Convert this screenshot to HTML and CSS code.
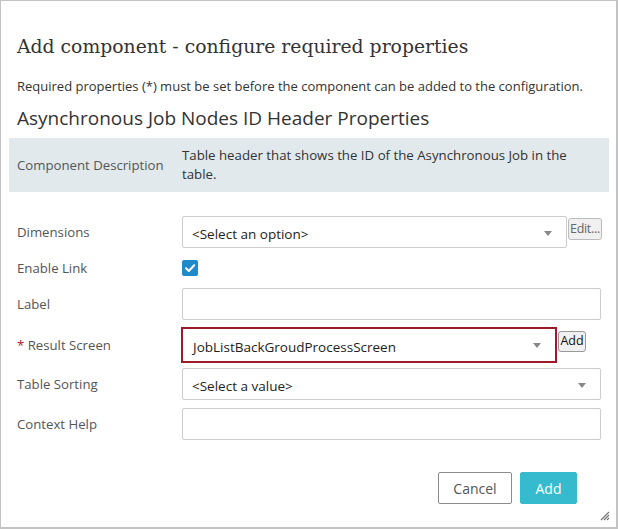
FILE: index.html
```html
<!DOCTYPE html>
<html>
<head>
<meta charset="utf-8">
<link rel="stylesheet" href="styles.css">
</head>
<body>
<div class="dialog">
  <h1 class="title">Add component - configure required properties</h1>
  <p class="intro">Required properties (*) must be set before the component can be added to the configuration.</p>
  <h2 class="heading">Asynchronous Job Nodes ID Header Properties</h2>
  <div class="desc">
    <div class="desc-label">Component Description</div>
    <div class="desc-text">Table header that shows the ID of the Asynchronous Job in the table.</div>
  </div>
  <div class="form">
    <div class="row">
      <div class="label">Dimensions</div>
      <div class="control">
        <div class="select sel-dim"><span>&lt;Select an option&gt;</span><i class="arrow"></i></div>
        <button class="mini mini-edit">Edit...</button>
      </div>
    </div>
    <div class="row row-check">
      <div class="label">Enable Link</div>
      <div class="control">
        <span class="checkbox"><svg width="16" height="16" viewBox="0 0 16 16"><path d="M4 8.2 L6.8 11 L12.2 5.2" fill="none" stroke="#fff" stroke-width="2" stroke-linecap="round" stroke-linejoin="round"/></svg></span>
      </div>
    </div>
    <div class="row">
      <div class="label">Label</div>
      <div class="control"><div class="input"></div></div>
    </div>
    <div class="row">
      <div class="label"><span class="req">*</span> Result Screen</div>
      <div class="control">
        <div class="select sel-result"><span>JobListBackGroudProcessScreen</span><i class="arrow"></i></div>
        <button class="mini mini-add">Add</button>
      </div>
    </div>
    <div class="row">
      <div class="label">Table Sorting</div>
      <div class="control"><div class="select sel-full"><span>&lt;Select a value&gt;</span><i class="arrow"></i></div></div>
    </div>
    <div class="row">
      <div class="label">Context Help</div>
      <div class="control"><div class="input"></div></div>
    </div>
  </div>
  <div class="footer">
    <button class="btn btn-cancel">Cancel</button>
    <button class="btn btn-add">Add</button>
  </div>
  <svg class="grip" width="12" height="12" viewBox="0 0 12 12"><path d="M11 3 L3 11 M11 6 L6 11 M11 9 L9 11" stroke="#777" stroke-width="1.2" fill="none"/></svg>
</div>
</body>
</html>
```
FILE: styles.css
```css
* { box-sizing: border-box; }
html, body { margin: 0; padding: 0; background: #fff; }
body { font-family: "Open Sans", "Noto Sans", sans-serif; color: #333; }
.dialog {
  position: relative;
  width: 618px;
  height: 529px;
  border: 1px solid #c3c3c3;
  border-right-width: 2px;
  border-bottom-width: 2px;
  padding: 0 7px 0 8px;
}
.title {
  margin: 30px 0 0;
  padding-left: 8px;
  font-family: "DejaVu Serif", "Liberation Serif", serif;
  font-weight: normal;
  font-size: 18.8px;
  line-height: 32px;
  color: #333;
}
.intro {
  margin: 13px 0 0;
  padding-left: 8px;
  font-size: 13px;
  line-height: 20px;
  color: #333;
}
.heading {
  margin: 9px 0 0;
  padding-left: 8px;
  font-weight: normal;
  font-size: 19px;
  line-height: 26px;
  color: #333;
}
.desc {
  margin-top: 7px;
  background: #e1e9ec;
  height: 54px;
  display: grid;
  grid-template-columns: 165px 1fr;
  align-items: center;
  padding: 0 8px;
}
.desc-label { font-size: 13.2px; color: #555; }
.desc-text { font-size: 13.25px; line-height: 19px; color: #333; }
.form {
  margin-top: 24px;
  display: flex;
  flex-direction: column;
  gap: 8px;
  padding: 0 8px;
}
.row {
  display: grid;
  grid-template-columns: 165px 1fr;
  align-items: center;
  height: 32px;
}
.row-check { height: 24px; }
.label { font-size: 13.2px; color: #555; }
.req { color: #b0182a; }
.control { display: flex; align-items: center; height: 100%; }
.input {
  width: 100%;
  height: 32px;
  border: 1px solid #ccc;
  border-radius: 2px;
}
.select {
  position: relative;
  height: 32px;
  border: 1px solid #ccc;
  border-radius: 2px;
  display: flex;
  align-items: center;
  padding: 3px 0 0 9px;
  font-size: 13.5px;
  color: #222;
}
.sel-dim { width: 385px; }
.sel-full { width: 100%; }
.sel-result {
  width: 372px;
  margin-left: 1px;
  margin-top: 1px;
  border: none;
  border-radius: 0;
  outline: 2px solid #9d1a28;
  padding-left: 10px;
}
.arrow {
  position: absolute;
  right: 14px;
  top: 14px;
  width: 0; height: 0;
  border-left: 4.5px solid transparent;
  border-right: 4.5px solid transparent;
  border-top: 5px solid #888;
}
.mini {
  font-family: "Open Sans", "Noto Sans", sans-serif;
  padding: 0;
  margin: 0;
  border: 1px solid #bbb;
  border-radius: 3px;
  background: #f0f0f0;
  font-size: 12.5px;
  line-height: 18px;
  text-align: center;
}
.mini-edit { margin-left: 1px; height: 22px; color: #666; width: 34px; margin-top: -6px; letter-spacing: -0.3px; }
.mini-add { margin-left: 3px; height: 21px; color: #111; width: 28px; border-color: #999; margin-top: -7px; }
.checkbox {
  display: inline-flex;
  width: 16px; height: 16px;
  background: #1f8acb;
  border-radius: 2px;
}
.footer {
  margin-top: 32px;
  display: flex;
  justify-content: flex-end;
  gap: 8px;
  padding-right: 32px;
}
.btn {
  font-family: "Open Sans", "Noto Sans", sans-serif;
  height: 32px;
  font-size: 14px;
  border-radius: 2px;
  margin: 0;
}
.btn-cancel { width: 74px; background: #fff; border: 1px solid #8c8c8c; color: #555; }
.btn-add { width: 57px; background: #35bbcd; border: 1px solid #35bbcd; color: #fff; }
.grip { position: absolute; right: 6px; bottom: 6px; }
```
